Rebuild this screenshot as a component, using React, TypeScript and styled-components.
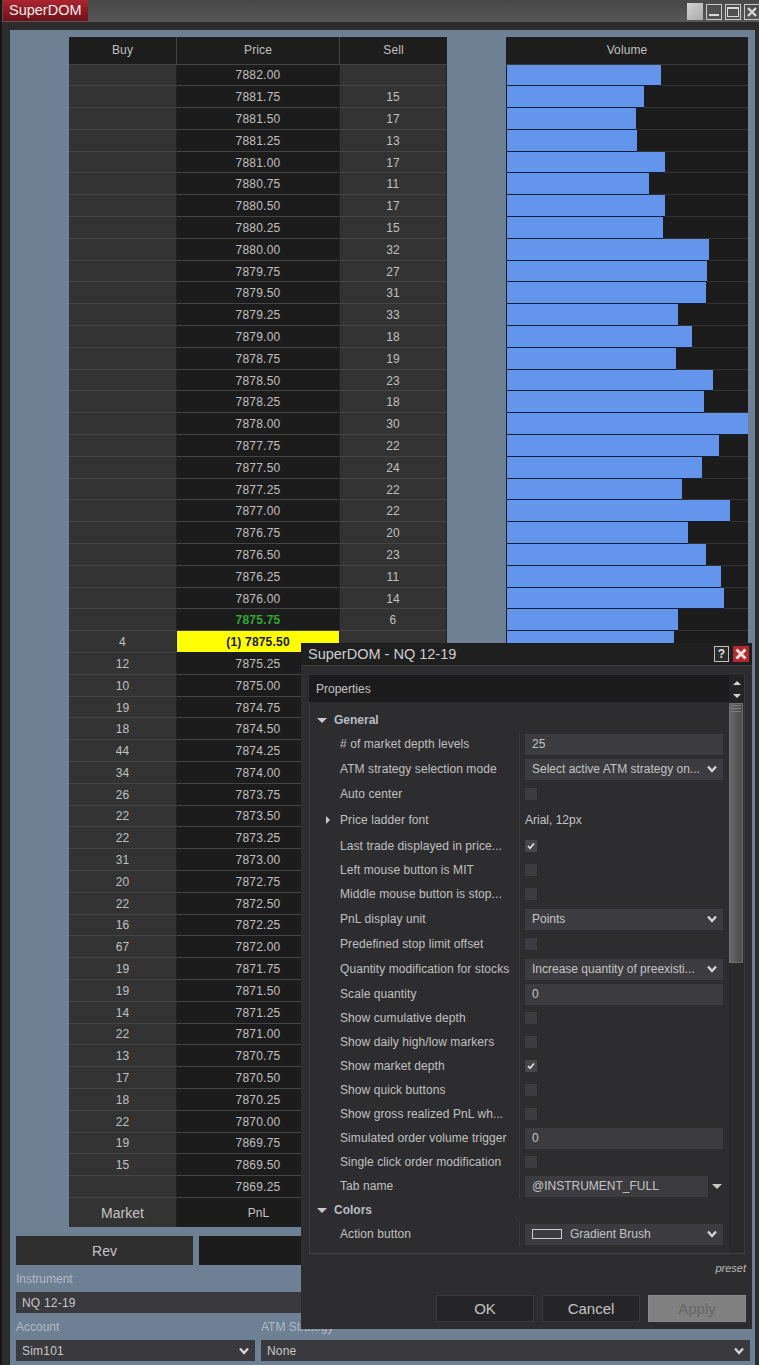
import styled, { createGlobalStyle } from 'styled-components';

const GlobalStyle = createGlobalStyle`
  html, body {
    margin: 0;
    padding: 0;
    background: #2c2c2c;
  }
  body {
    font-family: 'Liberation Sans', Arial, sans-serif;
    font-size: 12px;
    color: #c4c4c4;
  }
  * {
    box-sizing: border-box;
  }
`;

const sell = [null, 15, 17, 13, 17, 11, 17, 15, 32, 27, 31, 33, 18, 19, 23, 18, 30, 22, 24, 22, 22, 20, 23, 11, 14, 6];
const buy = [4, 12, 10, 19, 18, 44, 34, 26, 22, 22, 31, 20, 22, 16, 67, 19, 19, 14, 22, 13, 17, 18, 22, 19, 15, null];
const barEnds = [661, 644, 636, 637, 665, 649, 665, 663, 709, 707, 706, 678, 692, 676, 713, 704, 748, 719, 702, 682, 730, 688, 706, 721, 724, 678, 674];

const prices = Array.from({ length: 52 }, (_, i) => (7882 - i * 0.25).toFixed(2));

type Prop =
  | { kind: 'section'; label: string }
  | { kind: 'input'; label: string; value: string; h?: number }
  | { kind: 'select'; label: string; value: string; h?: number }
  | { kind: 'check'; label: string; checked?: boolean }
  | { kind: 'text'; label: string; value: string }
  | { kind: 'combo'; label: string; value: string }
  | { kind: 'brush'; label: string; value: string };

const properties: Prop[] = [
  { kind: 'section', label: 'General' },
  { kind: 'input', label: '# of market depth levels', value: '25', h: 24 },
  { kind: 'select', label: 'ATM strategy selection mode', value: 'Select active ATM strategy on...', h: 26 },
  { kind: 'check', label: 'Auto center' },
  { kind: 'text', label: 'Price ladder font', value: 'Arial, 12px' },
  { kind: 'check', label: 'Last trade displayed in price...', checked: true },
  { kind: 'check', label: 'Left mouse button is MIT' },
  { kind: 'check', label: 'Middle mouse button is stop...' },
  { kind: 'select', label: 'PnL display unit', value: 'Points', h: 26 },
  { kind: 'check', label: 'Predefined stop limit offset' },
  { kind: 'select', label: 'Quantity modification for stocks', value: 'Increase quantity of preexisti...', h: 26 },
  { kind: 'input', label: 'Scale quantity', value: '0', h: 24 },
  { kind: 'check', label: 'Show cumulative depth' },
  { kind: 'check', label: 'Show daily high/low markers' },
  { kind: 'check', label: 'Show market depth', checked: true },
  { kind: 'check', label: 'Show quick buttons' },
  { kind: 'check', label: 'Show gross realized PnL wh...' },
  { kind: 'input', label: 'Simulated order volume trigger', value: '0', h: 24 },
  { kind: 'check', label: 'Single click order modification' },
  { kind: 'combo', label: 'Tab name', value: '@INSTRUMENT_FULL' },
  { kind: 'section', label: 'Colors' },
  { kind: 'brush', label: 'Action button', value: 'Gradient Brush' },
];

const Chevron = () => (
  <ChevronIcon viewBox="0 0 10 8" aria-hidden="true">
    <path d="M1 1.5 L5 6 L9 1.5" fill="none" stroke="#d4d4d4" strokeWidth="2.4" />
  </ChevronIcon>
);

const App = () => {
  return (
    <Page>
      <GlobalStyle />
      <TitleBar>
        <TitleTab>SuperDOM</TitleTab>
        <WindowControls>
          <GreySquare />
          <ControlButton>
            <svg width="10" height="10" viewBox="0 0 10 10" aria-hidden="true">
              <rect x="0" y="7" width="10" height="2" fill="#d8d8d8" />
            </svg>
          </ControlButton>
          <ControlButton>
            <svg width="12" height="10" viewBox="0 0 12 10" aria-hidden="true">
              <rect x="0.5" y="0.5" width="11" height="9" fill="none" stroke="#d8d8d8" />
              <rect x="0" y="0" width="12" height="2" fill="#d8d8d8" />
            </svg>
          </ControlButton>
          <ControlButton>
            <svg width="10" height="10" viewBox="0 0 10 10" aria-hidden="true">
              <path d="M1 1 L9 9 M9 1 L1 9" stroke="#d8d8d8" strokeWidth="2.4" />
            </svg>
          </ControlButton>
        </WindowControls>
      </TitleBar>

      <Panel>
        <LadderArea>
          <Ladder>
            <HeaderRow>
              <HeaderCell>Buy</HeaderCell>
              <HeaderCell>Price</HeaderCell>
              <HeaderCell>Sell</HeaderCell>
            </HeaderRow>
            {prices.map((price, i) => (
              <LadderRow key={price}>
                <SideCell>{i >= 26 ? buy[i - 26] : ''}</SideCell>
                <PriceCell $last={i === 25} $position={i === 26}>
                  {i === 26 ? `(1) ${price}` : price}
                </PriceCell>
                <SideCell>{i < 26 ? sell[i] : ''}</SideCell>
              </LadderRow>
            ))}
            <FooterRow>
              <MarketCell>Market</MarketCell>
              <PnlCell>PnL</PnlCell>
              <MarketCell />
            </FooterRow>
          </Ladder>

          <VolumeColumn>
            <VolumeHeader>Volume</VolumeHeader>
            {prices.map((price, i) => (
              <VolumeRow key={price}>
                {i < barEnds.length && <VolumeBar style={{ width: barEnds[i] - 507 }} />}
              </VolumeRow>
            ))}
          </VolumeColumn>
        </LadderArea>

        <Controls>
          <ButtonRow>
            <RevButton>Rev</RevButton>
            <CloseButton />
          </ButtonRow>
          <FieldLabel>Instrument</FieldLabel>
          <Field>NQ 12-19</Field>
          <SelectRow>
            <div>
              <FieldLabel>Account</FieldLabel>
              <Field>
                Sim101
                <Chevron />
              </Field>
            </div>
            <div>
              <FieldLabel>ATM Strategy</FieldLabel>
              <Field>
                None
                <Chevron />
              </Field>
            </div>
          </SelectRow>
        </Controls>
      </Panel>

      <Dialog>
        <DialogTitle>
          SuperDOM - NQ 12-19
          <DialogActions>
            <HelpButton>?</HelpButton>
            <DialogClose>
              <svg width="12" height="12" viewBox="0 0 12 12" aria-hidden="true">
                <path d="M1.5 1.5 L10.5 10.5 M10.5 1.5 L1.5 10.5" stroke="#f2dcdc" strokeWidth="3" />
              </svg>
            </DialogClose>
          </DialogActions>
        </DialogTitle>

        <PropertyGrid>
          <PropertyMain>
            <PropertyHeader>Properties</PropertyHeader>
            {properties.map((p) =>
              p.kind === 'section' ? (
                <SectionRow key={p.label}>
                  <TriangleDown />
                  {p.label}
                </SectionRow>
              ) : (
                <PropertyRow key={p.label} $h={rowHeight(p)}>
                  <PropertyLabel>
                    {p.kind === 'text' && <TriangleRight />}
                    {p.label}
                  </PropertyLabel>
                  <PropertyValue>
                    {p.kind === 'input' && <ValueBox>{p.value}</ValueBox>}
                    {p.kind === 'select' && (
                      <ValueBox>
                        {p.value}
                        <Chevron />
                      </ValueBox>
                    )}
                    {p.kind === 'check' && <CheckBox $checked={p.checked}>{p.checked && <CheckMark />}</CheckBox>}
                    {p.kind === 'text' && <PlainValue>{p.value}</PlainValue>}
                    {p.kind === 'combo' && (
                      <ComboWrap>
                        <ComboBox>{p.value}</ComboBox>
                        <TriangleDown />
                      </ComboWrap>
                    )}
                    {p.kind === 'brush' && (
                      <ValueBox>
                        <BrushSwatch />
                        {p.value}
                        <Chevron />
                      </ValueBox>
                    )}
                  </PropertyValue>
                </PropertyRow>
              ),
            )}
          </PropertyMain>
          <ScrollBar>
            <ScrollArrows>
              <ArrowUp />
              <ArrowDown />
            </ScrollArrows>
            <ScrollThumb />
          </ScrollBar>
        </PropertyGrid>

        <PresetLink>preset</PresetLink>
        <DialogButtons>
          <DialogButton>OK</DialogButton>
          <DialogButton>Cancel</DialogButton>
          <DialogButton $disabled>Apply</DialogButton>
        </DialogButtons>
      </Dialog>
    </Page>
  );
};

const rowHeight = (p: Prop) => {
  if (p.kind === 'text') return 28;
  if ((p.kind === 'input' || p.kind === 'select') && p.h) return p.h;
  if (p.kind === 'input' || p.kind === 'select') return 25;
  return 24;
};

const Page = styled.div`
  position: relative;
  width: 759px;
  height: 1365px;
  overflow: hidden;
  background: #2c2c2c;
  border-left: 2px solid #161616;
`;

const TitleBar = styled.div`
  display: flex;
  justify-content: space-between;
  height: 22px;
  padding-left: 1px;
  background: linear-gradient(#484848, #575757);
`;

const TitleTab = styled.div`
  width: 85px;
  height: 21px;
  padding-left: 6px;
  font-size: 14.5px;
  line-height: 21px;
  color: #ececec;
  background: linear-gradient(#ab2530, #701019);
`;

const WindowControls = styled.div`
  display: flex;
  align-items: center;
  gap: 3px;
  padding-top: 1px;
  margin-right: -1px;
`;

const GreySquare = styled.div`
  width: 16px;
  height: 17px;
  background: linear-gradient(135deg, #d4d4d4, #a8a8a8);
`;

const ControlButton = styled.div`
  display: flex;
  align-items: center;
  justify-content: center;
  width: 16px;
  height: 16px;
  border: 1px solid #c8c8c8;
`;

const Panel = styled.div`
  width: 745px;
  height: 1335px;
  margin: 8px 0 0 8px;
  padding-top: 7px;
  background: #6d8094;
`;

const LadderArea = styled.div`
  display: flex;
  align-items: flex-start;
  gap: 59px;
  height: 1190px;
  padding-left: 59px;
`;

const Ladder = styled.div`
  width: 378px;
  flex-shrink: 0;
`;

const HeaderRow = styled.div`
  display: grid;
  grid-template-columns: 108px 163px 107px;
  height: 27.5px;
  background: #1d1d1d;
  border-bottom: 1px solid #444;
`;

const HeaderCell = styled.div`
  display: flex;
  align-items: center;
  justify-content: center;
  border-right: 1px solid #444;
  color: #c0c0c0;
  letter-spacing: 0.1px;

  &:last-child {
    border-right: none;
  }
`;

const LadderRow = styled.div`
  display: grid;
  grid-template-columns: 108px 163px 107px;
  height: 21.8px;
`;

const SideCell = styled.div`
  display: flex;
  align-items: center;
  justify-content: center;
  padding-top: 1px;
  background: #333;
  border-bottom: 1px solid #454545;
  border-right: 1px solid #222;
  color: #c0c0c0;
  letter-spacing: 0.2px;
`;

const PriceCell = styled.div<{ $last?: boolean; $position?: boolean }>`
  display: flex;
  align-items: center;
  justify-content: center;
  padding-top: 1px;
  background: ${(p) => (p.$position ? '#ffff00' : '#1c1c1c')};
  border-bottom: 1px solid ${(p) => (p.$position ? '#1c1c1c' : '#454545')};
  border-right: 1px solid #222;
  color: ${(p) => (p.$position ? '#1a1a40' : p.$last ? '#32a532' : '#c0c0c0')};
  font-weight: ${(p) => (p.$last || p.$position ? 700 : 400)};
  letter-spacing: 0.2px;
`;

const FooterRow = styled.div`
  display: grid;
  grid-template-columns: 108px 163px 107px;
  height: 29.5px;
`;

const MarketCell = styled.div`
  display: flex;
  align-items: center;
  justify-content: center;
  background: #333;
  border-right: 1px solid #222;
  font-size: 14px;
`;

const PnlCell = styled.div`
  display: flex;
  align-items: center;
  justify-content: center;
  background: #1c1c1c;
`;

const VolumeColumn = styled.div`
  width: 242px;
  flex-shrink: 0;
`;

const VolumeHeader = styled.div`
  display: flex;
  align-items: center;
  justify-content: center;
  height: 27.5px;
  background: #1d1d1d;
  border-bottom: 1px solid #3c3c3c;
  color: #c0c0c0;
  letter-spacing: 0.1px;
`;

const VolumeRow = styled.div`
  height: 21.8px;
  padding-left: 1px;
  background: #1c1c1c;
  border-bottom: 1px solid #333;
`;

const VolumeBar = styled.div`
  height: 100%;
  background: #6495ed;
  box-shadow: 0 1px 0 #10203c;
`;

const Controls = styled.div`
  padding: 9px 5px 0 6px;
`;

const ButtonRow = styled.div`
  display: flex;
  gap: 6px;
  margin-bottom: 7px;
`;

const RevButton = styled.div`
  display: flex;
  align-items: center;
  justify-content: center;
  width: 177px;
  height: 29px;
  background: #2e2e2e;
  font-size: 14px;
`;

const CloseButton = styled.div`
  flex: 1;
  height: 29px;
  background: #1c1c1c;
`;

const FieldLabel = styled.div`
  height: 15px;
  margin-bottom: 5px;
  line-height: 15px;
  color: #b0bac4;
`;

const Field = styled.div`
  position: relative;
  display: flex;
  align-items: center;
  justify-content: space-between;
  height: 21px;
  padding: 0 6px;
  background: #3a3a3e;
  color: #c8c8c8;
  letter-spacing: 0.2px;
`;

const SelectRow = styled.div`
  display: grid;
  grid-template-columns: 239px 489px;
  gap: 6px;
  margin-top: 7px;
`;

const ChevronIcon = styled.svg`
  width: 10px;
  height: 8px;
  flex-shrink: 0;
  margin-left: auto;
`;

const Dialog = styled.div`
  position: absolute;
  top: 643px;
  left: 299px;
  width: 451px;
  height: 686px;
  background: #2d2d2f;
`;

const DialogTitle = styled.div`
  display: flex;
  align-items: center;
  justify-content: space-between;
  height: 23px;
  padding: 0 3px 0 7px;
  background: #1f1f20;
  border-bottom: 1px solid #3c3c3c;
  font-size: 14.5px;
  color: #cfcfcf;
`;

const DialogActions = styled.div`
  display: flex;
  gap: 4px;
`;

const HelpButton = styled.div`
  display: flex;
  align-items: center;
  justify-content: center;
  width: 15px;
  height: 16px;
  border: 1px solid #c0c0c0;
  background: #2a2a2a;
  font-size: 12px;
  font-weight: 700;
  color: #e0e0e0;
`;

const DialogClose = styled.div`
  display: flex;
  align-items: center;
  justify-content: center;
  width: 16px;
  height: 16px;
  background: #b02a30;
`;

const PropertyGrid = styled.div`
  display: flex;
  width: 436px;
  height: 579px;
  margin: 9px 0 0 8px;
  border-bottom: 1px solid #444;
  border-left: 1px solid #3a3a3a;
  border-right: 1px solid #3a3a3a;
`;

const PropertyMain = styled.div`
  flex: 1;
  padding-bottom: 8px;
`;

const PropertyHeader = styled.div`
  display: flex;
  align-items: center;
  height: 27px;
  margin: 0 0 6px -1px;
  padding-left: 7px;
  background: #1b1b1b;
  color: #c4c4c4;
`;

const SectionRow = styled.div`
  display: flex;
  align-items: center;
  gap: 7px;
  height: 24px;
  padding-left: 7px;
  font-weight: 700;
  color: #b8bcc4;
`;

const PropertyRow = styled.div<{ $h: number }>`
  display: grid;
  grid-template-columns: 209px 1fr;
  height: ${(p) => p.$h}px;
`;

const PropertyLabel = styled.div`
  position: relative;
  display: flex;
  align-items: center;
  padding-left: 30px;
  white-space: nowrap;
  color: #c0c0c0;
  letter-spacing: 0.08px;
`;

const PropertyValue = styled.div`
  display: flex;
  align-items: center;
  padding: 0 6px 0 5px;
  border-left: 1px solid #3a3a3c;
`;

const ValueBox = styled.div`
  display: flex;
  align-items: center;
  width: 100%;
  height: 21px;
  padding: 0 6px 0 7px;
  background: #3c3c40;
  color: #c4c4c4;
  white-space: nowrap;
`;

const CheckBox = styled.div<{ $checked?: boolean }>`
  display: flex;
  align-items: center;
  justify-content: center;
  width: 12px;
  height: 12px;
  background: ${(p) => (p.$checked ? '#45454a' : '#3c3c40')};
`;

const CheckMark = () => (
  <svg width="8" height="8" viewBox="0 0 8 8" aria-hidden="true">
    <path d="M1 4 L3 6.2 L7 1.5" fill="none" stroke="#e4e4e4" strokeWidth="1.6" />
  </svg>
);

const PlainValue = styled.div`
  color: #c4c4c4;
`;

const ComboWrap = styled.div`
  display: flex;
  align-items: center;
  gap: 4px;
  width: 100%;
`;

const ComboBox = styled.div`
  display: flex;
  align-items: center;
  width: 183px;
  height: 21px;
  padding-left: 7px;
  background: #3c3c40;
`;

const BrushSwatch = styled.div`
  width: 30px;
  height: 10px;
  margin-right: 8px;
  border: 1px solid #d0d0d0;
`;

const TriangleDown = styled.span`
  width: 0;
  height: 0;
  border-left: 5px solid transparent;
  border-right: 5px solid transparent;
  border-top: 5px solid #c8c8c8;
`;

const TriangleRight = styled.span`
  position: absolute;
  left: 16px;
  top: 50%;
  margin-top: -4px;
  width: 0;
  height: 0;
  border-top: 4px solid transparent;
  border-bottom: 4px solid transparent;
  border-left: 4px solid #c8c8c8;
`;

const ScrollBar = styled.div`
  width: 15px;
  flex-shrink: 0;
  background: #2a2a2c;
`;

const ScrollArrows = styled.div`
  display: flex;
  flex-direction: column;
  align-items: center;
  justify-content: center;
  gap: 9px;
  height: 28px;
  background: #232325;
`;

const ArrowUp = styled.span`
  width: 0;
  height: 0;
  border-left: 4px solid transparent;
  border-right: 4px solid transparent;
  border-bottom: 4px solid #d4d4d4;
`;

const ArrowDown = styled.span`
  width: 0;
  height: 0;
  border-left: 4px solid transparent;
  border-right: 4px solid transparent;
  border-top: 4px solid #d4d4d4;
`;

const ScrollThumb = styled.div`
  position: relative;
  width: 14px;
  height: 260px;
  border: 1px solid #6e6e6e;
  background: linear-gradient(90deg, #686868, #4c4c4c);

  &::before {
    content: '';
    position: absolute;
    top: 1px;
    left: 1px;
    right: 1px;
    height: 7px;
    background: repeating-linear-gradient(#7c7c7c 0 1px, transparent 1px 3px);
  }
`;

const PresetLink = styled.div`
  margin: 8px 6px 0 0;
  text-align: right;
  font-size: 11px;
  font-style: italic;
  color: #b8b8b8;
`;

const DialogButtons = styled.div`
  display: flex;
  justify-content: flex-end;
  gap: 8px;
  margin-top: 21px;
  padding-right: 6px;
`;

const DialogButton = styled.div<{ $disabled?: boolean }>`
  display: flex;
  align-items: center;
  justify-content: center;
  width: 98px;
  height: 27px;
  background: ${(p) => (p.$disabled ? '#808080' : '#252527')};
  border: 1px solid ${(p) => (p.$disabled ? '#8a8a8a' : '#3a3a3c')};
  font-size: 15px;
  color: ${(p) => (p.$disabled ? '#666' : '#c4c4c4')};
`;

export default App;
